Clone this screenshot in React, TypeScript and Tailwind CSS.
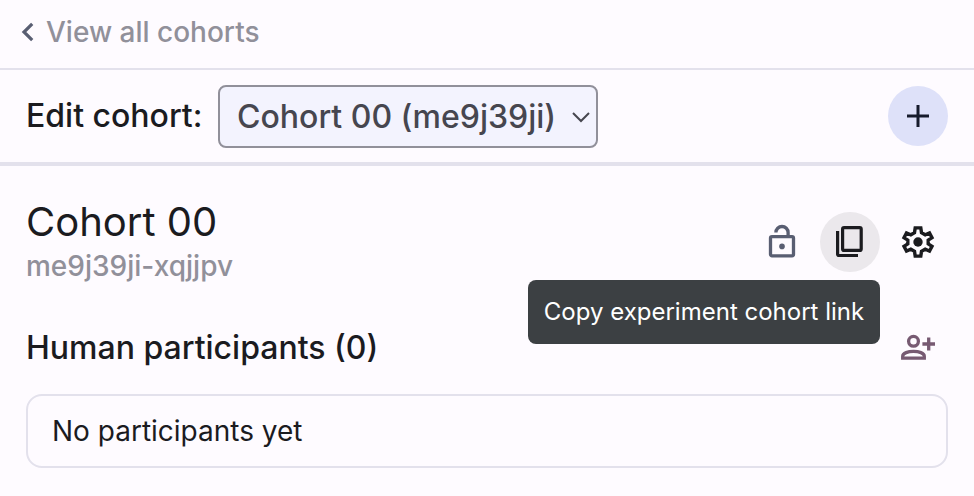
import React from "react";

const text = "whitespace-nowrap";

function Gear() {
  return (
    <svg className="size-10" viewBox="0 0 40 40" fill="none">
      <path
        d="M17.2 5.9H22.8L23.5 10.6L27.2 12.8L31.5 11L34 15.6L30.2 18.2V21.8L34 24.4L31.5 29L27.2 27.2L23.5 29.4L22.8 34.1H17.2L16.5 29.4L12.8 27.2L8.5 29L6 24.4L9.8 21.8V18.2L6 15.6L8.5 11L12.8 12.8L16.5 10.6Z"
        stroke="#1b1b1f"
        strokeWidth="3.4"
      />
      <circle cx="20" cy="20" r="4.7" fill="#1b1b1f" />
    </svg>
  );
}

export default function App() {
  return (
    <div className="h-[496px] w-[974px] overflow-hidden bg-[#fefbff] font-['Inter',sans-serif] text-[#1b1b1f]">
      <header className="flex h-[70px] items-center border-b-2 border-[#e3e1ec] pb-[4px] pl-[20px]">
        <svg className="mr-[12px] h-6 w-[14px]" viewBox="0 0 14 24" fill="none">
          <path d="M12.2 3.9L4 12L12.2 20.1" stroke="#595e72" strokeWidth="3.2" />
        </svg>
        <span className={`${text} text-[28px] font-medium text-[#91909a]`}>View all cohorts</span>
      </header>
      <div className="flex h-[96px] items-center border-b-4 border-[#e3e1ec] pr-[26px] pl-[26px]">
        <span className={`${text} w-[192px] text-[32px] font-medium`}>Edit cohort:</span>
        <button className="flex h-[63px] w-[380px] items-center justify-between rounded-[8px] border-2 border-[#91909a] bg-[#f3f3fe] pt-[2px] pr-[5px] pl-[17px]">
          <span className={`${text} text-[32px] font-medium text-[#46464f]`}>Cohort 00 (me9j39ji)</span>
          <svg className="h-3 w-5" viewBox="0 0 20 12" fill="none">
            <path d="M2 2L10 10L18 2" stroke="#46464f" strokeWidth="2" />
          </svg>
        </button>
        <button className="ml-auto flex size-[60px] items-center justify-center rounded-full bg-[#dee1f9]">
          <svg className="size-6" viewBox="0 0 24 24" fill="none">
            <path d="M12 1V23M1 12H23" stroke="#161b2c" strokeWidth="3" />
          </svg>
        </button>
      </div>
      <main className="px-[26px] pt-[30px]">
        <div className="flex h-[92px] justify-between">
          <div>
            <h1 className={`${text} h-[52px] text-[40px] leading-[52px]`}>Cohort 00</h1>
            <p className={`${text} text-[28px] leading-[36px] font-medium text-[#91909a]`}>me9j39ji-xqjjpv</p>
          </div>
          <div className="mt-[16px] flex h-[60px] gap-[8px]">
            <button className="flex size-[60px] items-center justify-center">
              <svg className="size-10" viewBox="0 0 40 40" fill="none" stroke="#595e72" strokeWidth="3.3">
                <rect x="8.5" y="14.6" width="23" height="19.2" rx="1.5" />
                <path d="M13.9 10.6A6.1 6.1 0 0 1 26.1 10.6V14" />
                <circle cx="20" cy="24.4" r="2.8" fill="#595e72" stroke="none" />
              </svg>
            </button>
            <button className="relative flex size-[60px] items-center justify-center rounded-full bg-[#ebe8ec]">
              <svg className="size-10" viewBox="0 0 40 40" fill="none" stroke="#1b1b1f" strokeWidth="3.2">
                <rect x="12.6" y="5.6" width="18.6" height="22.8" rx="1.5" />
                <path d="M7.6 9V32Q7.6 33.5 9.1 33.5H28" />
              </svg>
              <span className={`${text} absolute top-[68px] right-0 flex h-[64px] w-[352px] items-center justify-center rounded-[8px] bg-[#3c4043] text-[24px] text-white`}>Copy experiment cohort link</span>
            </button>
            <button className="flex size-[60px] items-center justify-center">
              <Gear />
            </button>
          </div>
        </div>
        <div className="flex h-[106px] items-center justify-between pt-[14px]">
          <h2 className={`${text} text-[32px] font-medium`}>Human participants (0)</h2>
          <svg className="mr-[10px] size-10" viewBox="0 0 40 40" fill="none" stroke="#775a72" strokeWidth="3.3">
            <circle cx="15.5" cy="13.3" r="4.9" />
            <path d="M4.7 30.2V28.2C4.7 21.8 26.3 21.8 26.3 28.2V30.2ZM30.7 9.5V22.5M24.4 16H37" />
          </svg>
        </div>
        <div className="flex h-[74px] items-center rounded-[16px] border-2 border-[#e3e1ec] px-[24px] text-[28px]">
          <span className={text}>No participants yet</span>
        </div>
      </main>
    </div>
  );
}
